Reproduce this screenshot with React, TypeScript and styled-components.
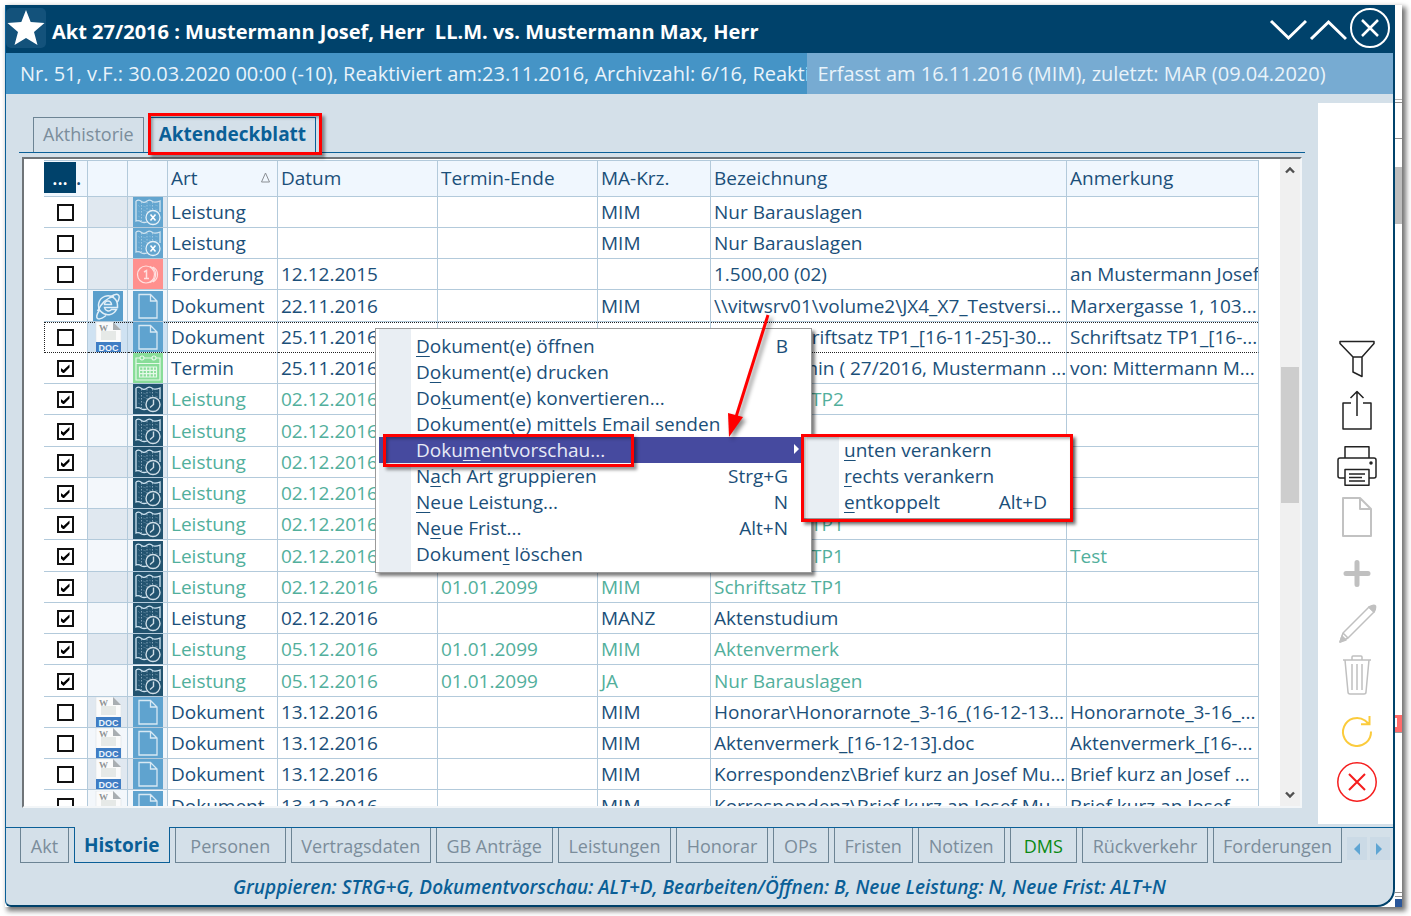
import React, { useState } from "react";
import styled, { createGlobalStyle, css } from "styled-components";

const color = {
  navy: "#00426b",
  blue: "#4594c6",
  blueLight: "#77abd2",
  panel: "#d4e0e9",
  line: "#b3cadb",
  accent: "#0a5f97",
  text: "#1b4f79",
  done: "#52af9c",
  muted: "#7b8d9b",
  mutedBorder: "#6c8494",
  red: "#ff0000",
};

const GlobalStyle = createGlobalStyle`
  *, *::before, *::after { box-sizing: border-box; }
  body {
    margin: 0;
    background: #fff;
    font-family: "Open Sans", "Noto Sans", sans-serif;
    font-size: 19px;
    line-height: 26px;
    color: ${color.text};
  }
  button { font: inherit; color: inherit; margin: 0; padding: 0; border: 0; background: none; cursor: pointer; }
  svg { display: block; }
`;

/* ---------- frame ---------- */

const Page = styled.div`
  height: 100vh;
  min-width: 1100px;
  padding: 5px 9px 9px 5px;
`;

const Capture = styled.div`
  position: relative;
  display: flex;
  height: 100%;
  background: #fff;
  box-shadow: 3px 3px 5px 1px rgba(0, 0, 0, 0.55);
`;

const Window = styled.section`
  flex: 1;
  min-width: 0;
  display: flex;
  flex-direction: column;
  background: ${color.panel};
  border: solid ${color.navy};
  border-width: 0 2px 2px 0;
  border-left: 1px solid ${color.accent};
  border-radius: 0 0 18px 6px;
  overflow: hidden;
`;

const Backdrop = styled.div`
  display: flex;
  flex-direction: column;
  width: 7px;
`;

const Band = styled.i<{ $h?: number; $fill?: string; $grow?: boolean }>`
  display: block;
  height: ${(p) => p.$h ?? 0}px;
  flex: ${(p) => (p.$grow ? "1" : "none")};
  background: ${(p) => p.$fill ?? "transparent"};
`;

/* ---------- title ---------- */

const TitleBar = styled.header`
  display: flex;
  align-items: center;
  height: 48px;
  background: ${color.navy};
  color: #fff;
`;

const StarBox = styled.button`
  width: 40px;
  height: 40px;
  margin-bottom: 2px;
  border-radius: 5px;
  background: #13527b;
`;

const Title = styled.h1`
  flex: 1;
  margin: 6px 0 0 6px;
  font-size: 20px;
  font-weight: 700;
  line-height: 26px;
  white-space: pre;
`;

const WindowButtons = styled.div`
  display: flex;
  align-items: center;
  gap: 2px;
  margin-right: 2px;
`;

const InfoBar = styled.div`
  display: flex;
  height: 41px;
  font-size: 20px;
  line-height: 42px;
  color: #e9f3fa;
  white-space: nowrap;
`;

const InfoLeft = styled.div`
  flex: 803 0 0;
  padding-left: 14px;
  background: ${color.blue};
  overflow: hidden;
`;

const InfoRight = styled.div`
  flex: 587 0 0;
  padding-left: 10px;
  background: ${color.blueLight};
  overflow: hidden;
`;

/* ---------- body ---------- */

const Body = styled.div`
  flex: 1;
  min-height: 0;
  display: flex;
  padding-bottom: 3px;
`;

const Content = styled.main`
  flex: 1;
  min-width: 0;
  display: flex;
  flex-direction: column;
  padding: 23px 13px 16px 13px;
`;

const TopTabs = styled.div`
  display: flex;
  gap: 5px;
  padding-left: 14px;
  border-bottom: 1px solid ${color.accent};
`;

const TopTab = styled.button<{ $active?: boolean }>`
  height: 35px;
  padding: 0 9px 2px;
  border: 1px solid ${(p) => (p.$active ? color.accent : color.mutedBorder)};
  border-bottom: 0;
  color: ${(p) => (p.$active ? color.accent : color.muted)};
  font-size: ${(p) => (p.$active ? 19 : 18)}px;
  font-weight: ${(p) => (p.$active ? 700 : 400)};
`;

const GridFrame = styled.div`
  flex: 1;
  min-height: 0;
  display: flex;
  margin: 4px 3px 0;
  border: 2px solid #f3f6f8;
  border-top-color: #6f7478;
  border-left-color: #6f7478;
  background: #fff;
`;

const GridScroll = styled.div`
  flex: 1;
  min-width: 0;
  overflow: hidden;
  padding: 1px 21px 0 20px;
`;

const Table = styled.table`
  width: 100%;
  table-layout: fixed;
  border-collapse: separate;
  border-spacing: 0;
  border-top: 1px solid ${color.line};
`;

const Th = styled.th`
  height: 36px;
  padding: 0 3px 2px;
  background: #f0f7fe;
  border: solid ${color.line};
  border-width: 0 1px 1px 0;
  font-weight: 400;
  text-align: left;
  white-space: nowrap;
`;

const HeadFlex = styled.div`
  display: flex;
  justify-content: space-between;
  align-items: center;
  padding-right: 4px;
`;

const PickCell = styled(Th)`
  padding: 0 0 2px;
`;

const PickFlex = styled.div`
  display: flex;
  align-items: center;
  font-weight: 600;
`;

const PickButton = styled.button`
  width: 32px;
  height: 31px;
  background: ${color.navy};
  color: #fff;
`;

const Td = styled.td<{ $done?: boolean }>`
  height: 31px;
  padding: 0 0 0 3px;
  border: solid ${color.line};
  border-width: 0 1px 1px 0;
  line-height: 26px;
  white-space: nowrap;
  overflow: hidden;
  color: ${(p) => (p.$done ? color.done : color.text)};
`;

const CheckCell = styled(Td)`
  padding: 0 1px 2px 0;
  text-align: center;
`;

const IconCell = styled(Td)`
  padding: 0 0 0 5px;
  background: #e0e8f0;
`;

const Row = styled.tr<{ $focus?: boolean }>`
  &:nth-child(even) ${IconCell} { background: #f3f7fb; }
  &:nth-child(4n) ${Td} { height: 32px; }
  ${(p) =>
    p.$focus &&
    css`
      ${IconCell} { background: #cfe2f2; }
      ${Td} {
        border-bottom: 1px dotted #222;
        background-image: repeating-linear-gradient(90deg, #222 0 1px, transparent 1px 2px);
        background-size: 100% 1px;
        background-repeat: no-repeat;
      }
      ${Td}:first-child { border-left: 1px dotted #222; }
    `}
`;

const Check = styled.input`
  appearance: none;
  display: inline-block;
  position: relative;
  width: 17px;
  height: 17px;
  margin: 0;
  border: 2px solid #111;
  background: #fff;
  vertical-align: middle;
  &:checked::after {
    content: "";
    position: absolute;
    inset: 2px;
    background: #000;
    clip-path: polygon(0 38%, 0 70%, 34% 100%, 100% 34%, 100% 0, 34% 62%);
  }
`;

const ScrollBar = styled.div`
  width: 20px;
  display: flex;
  flex-direction: column;
  align-items: center;
  background: #f0f0f0;
`;

const ScrollArrow = styled.button`
  display: flex;
  align-items: center;
  justify-content: center;
  width: 20px;
  height: 22px;
`;

const ScrollSpace = styled.div<{ $grow: number }>`
  flex: ${(p) => p.$grow} 0 0;
`;

const ScrollThumb = styled.div`
  flex: 136 0 0;
  width: 18px;
  background: #cdcdcd;
`;

/* ---------- side tools ---------- */

const SideBar = styled.aside`
  display: flex;
  flex-direction: column;
  justify-content: flex-end;
  align-items: center;
  gap: 16px;
  width: 75px;
  margin-top: 9px;
  padding: 0 0 22px 3px;
  background: #fff;
`;

const ToolGroup = styled.div`
  display: flex;
  flex-direction: column;
  gap: 11px;
`;

/* ---------- bottom ---------- */

const BottomTabs = styled.nav`
  display: flex;
  align-items: flex-start;
  gap: 5px;
  padding: 0 3px 0 14px;
  border-top: 1px solid ${color.accent};
`;

const BottomTab = styled.button<{ $active?: boolean; $green?: boolean; $grow: number }>`
  flex: ${(p) => p.$grow} 1 0;
  height: 35px;
  padding-top: 2px;
  border: 1px solid ${color.mutedBorder};
  border-top: 0;
  font-size: 18px;
  color: ${(p) => (p.$green ? "#0a8a12" : color.muted)};
  white-space: nowrap;
  ${(p) =>
    p.$active &&
    css`
      margin-top: -1px;
      padding: 0;
      height: 36px;
      border-color: ${color.accent};
      color: ${color.accent};
      background: ${color.panel};
      font-size: 19px;
      font-weight: 700;
    `}
`;

const PagerGroup = styled.div`
  display: flex;
  gap: 3px;
  margin-top: 9px;
`;

const PagerButton = styled.button`
  display: flex;
  align-items: center;
  justify-content: center;
  width: 20px;
  height: 23px;
  background: #cbdae6;
`;

const Hint = styled.footer`
  padding: 11px 0 5px;
  font-size: 19px;
  line-height: 26px;
  font-style: italic;
  font-weight: 600;
  color: ${color.accent};
  text-align: center;
`;

/* ---------- menus ---------- */

const Menu = styled.div`
  position: absolute;
  left: 370px;
  top: 323px;
  width: 437px;
  padding: 4px 3px 5px;
  border: 1px solid #9a9a9a;
  background: linear-gradient(90deg, #fff 3px, #e9eef3 3px 35px, #fff 35px);
  box-shadow: 3px 3px 3px rgba(0, 0, 0, 0.5);
`;

const SubMenu = styled(Menu)`
  left: 798px;
  top: 431px;
  width: 268px;
  padding: 0 3px 3px;
`;

const MenuItem = styled.button<{ $active?: boolean }>`
  display: flex;
  justify-content: space-between;
  width: 100%;
  height: 26px;
  padding: 0 20px 0 37px;
  line-height: 26px;
  white-space: nowrap;
  background: ${(p) => (p.$active ? "#464a9f" : "transparent")};
  color: ${(p) => (p.$active ? "#e8eaf6" : color.text)};
  u { text-underline-offset: 3px; text-decoration-thickness: 1px; }
`;

const MenuCaret = styled.svg`
  margin: 7px -12px 0 0;
`;

const Marker = styled.div<{ $x: number; $y: number; $w: number; $h: number }>`
  position: absolute;
  left: ${(p) => p.$x}px;
  top: ${(p) => p.$y}px;
  width: ${(p) => p.$w}px;
  height: ${(p) => p.$h}px;
  border: 3px solid ${color.red};
  box-shadow: 3px 3px 3px rgba(0, 0, 0, 0.4), inset 2px 2px 3px rgba(0, 0, 0, 0.3);
  pointer-events: none;
`;

const ArrowLayer = styled.svg`
  position: absolute;
  left: 715px;
  top: 305px;
  filter: drop-shadow(3px 3px 2px rgba(0, 0, 0, 0.45));
  pointer-events: none;
`;

/* ---------- icons ---------- */

const MapSheet = () => (
  <>
    <path d="M3 4 Q6 2 8.5 4.5 Q11 6.5 14 4 Q17 2 19.5 4.5 Q22 6 27 4 V15 M3 4 V24 Q6 23 8.5 25 Q11 26 14 25" fill="none" stroke="#cfe3f0" strokeWidth="1.3" />
    <path d="M8.5 5 V24 M14 5 V21 M19.500 5 V15" fill="none" stroke="#cfe3f0" strokeWidth=".8" strokeDasharray="1.500 1.500" opacity=".7" />
    <path d="M5 8 l2 2 M10 9 l3 1 M10 13 l3 1 M16 8 l2 1 M16 12 l2 1 M22 8 l3 1 M22 12 l3 1 M5 14 l2 1 M5 19 l2 1 M10 18 l2 1" stroke="#cfe3f0" strokeWidth=".6" opacity=".35" />
  </>
);

const CancelIcon = () => (
  <svg width="30" height="30" viewBox="0 0 30 30">
    <rect width="30" height="30" fill="#63a5cf" />
    <MapSheet />
    <circle cx="20" cy="20.500" r="7" fill="#63a5cf" stroke="#e6f1f8" strokeWidth="1.300" />
    <path d="M17.500 17.500 l5 6 M22.500 17.500 l-5 6" stroke="#fff" strokeWidth="1.600" />
  </svg>
);

const ClockIcon = () => (
  <svg width="30" height="30" viewBox="0 0 30 30">
    <rect width="30" height="30" fill="#22536f" />
    <MapSheet />
    <circle cx="20" cy="20.500" r="7" fill="#22536f" stroke="#cfdde6" strokeWidth="1.400" />
    <path d="M20.500 15.500 V20.500 L17 23.500" fill="none" stroke="#cfdde6" strokeWidth="1.400" />
  </svg>
);

const MoneyIcon = () => (
  <svg width="30" height="30" viewBox="0 0 30 30">
    <rect width="30" height="30" fill="#ff908e" />
    <g fill="none" stroke="#ffe0df" strokeWidth="1.200">
      <circle cx="13" cy="15.500" r="8.500" />
      <path d="M17 7.500 A8.500 8.500 0 0 1 17 23.500 M20 8 A8.500 8.500 0 0 1 20 23" />
      <path d="M11 13 L13.500 11.500 V19.500 M11 19.500 H16" strokeWidth="1.500" />
    </g>
  </svg>
);

const FileIcon = () => (
  <svg width="30" height="30" viewBox="0 0 30 30">
    <rect width="30" height="30" fill="#5fa3cf" />
    <path d="M6 3.500 H17.500 L24 10 V27 H6 Z M17.500 3.500 V10 H24" fill="none" stroke="#d8e9f4" strokeWidth="1.300" />
  </svg>
);

const CalendarIcon = () => (
  <svg width="30" height="30" viewBox="0 0 30 30">
    <rect width="30" height="30" fill="#88dd98" />
    <g fill="none" stroke="#e6f9e9" strokeWidth="1.200">
      <path d="M7 5 H3 V27 H27 V5 H23 M11 5 H19 M3 10.500 H27" />
      <circle cx="9" cy="5" r="2" />
      <circle cx="21" cy="5" r="2" />
      <path d="M6.500 14 H23.500 V24 H6.500 Z M6.500 17.300 H23.500 M6.500 20.700 H23.500 M10 14 V24 M13.500 14 V24 M17 14 V24 M20.500 14 V24" />
    </g>
  </svg>
);

const BrowserIcon = () => (
  <svg width="30" height="30" viewBox="0 0 30 30">
    <rect width="30" height="30" fill="#5a9fcc" />
    <g fill="none" stroke="#e2eff8" strokeWidth="1.500">
      <path d="M23.500 18.500 A9.500 9.500 0 1 1 24.500 14.500 V16.500 H11.500 A4 4 0 0 0 18.500 18.500 Z" />
      <path d="M11.500 13.500 A3.500 3.500 0 0 1 18.500 13.500 Z" />
      <path d="M6.500 19 C0 29 6 30 13 24.500 M17 6 C25 1 28.500 3.500 24.500 11 M4.500 20 C8 13 14 7 21 5" />
    </g>
  </svg>
);

const DocIcon = () => (
  <svg width="30" height="30" viewBox="0 0 30 30">
    <path d="M3 0 H20 L28 8 V30 H3 Z" fill="#fbfbfb" stroke="#dde2e6" strokeWidth=".6" />
    <path d="M20 0 L28 8 H20 Z" fill="#a9aeb2" />
    <rect x="8" y="9" width="15" height="9" fill="#e6e9e7" />
    <text x="6" y="9" fontFamily="Liberation Serif" fontWeight="700" fontSize="9" fill="#8f9396">W</text>
    <rect x="3" y="20" width="25" height="10" fill="#3f7dc4" />
    <text x="15.500" y="28.500" textAnchor="middle" fontFamily="Liberation Sans" fontWeight="700" fontSize="9" fill="#eef5fc">DOC</text>
  </svg>
);

type ToolProps = { label: string; stroke: string; width?: number; children: React.ReactNode };

const Tool = ({ label, stroke, width = 1.5, children }: ToolProps) => (
  <button type="button" aria-label={label}>
    <svg width="42" height="40" viewBox="0 0 42 40" fill="none" stroke={stroke} strokeWidth={width} strokeLinejoin="round">
      {children}
    </svg>
  </button>
);

/* ---------- data ---------- */

type Kind = "cancel" | "clock" | "money" | "file" | "calendar";

type Entry = {
  checked?: boolean;
  attachment?: "web" | "doc";
  kind: Kind;
  art: string;
  datum?: string;
  ende?: string;
  kuerzel?: string;
  text: string;
  note?: string;
  done?: boolean;
  focus?: boolean;
};

const leistung = (datum: string, text: string, kuerzel = "MIM", note = "", ende = "01.01.2099"): Entry => ({
  checked: true, kind: "clock", art: "Leistung", datum, ende, kuerzel, text, note, done: true,
});

const dokument = (text: string, note: string): Entry => ({
  attachment: "doc", kind: "file", art: "Dokument", datum: "13.12.2016", kuerzel: "MIM", text, note,
});

const entries: Entry[] = [
  { kind: "cancel", art: "Leistung", kuerzel: "MIM", text: "Nur Barauslagen" },
  { kind: "cancel", art: "Leistung", kuerzel: "MIM", text: "Nur Barauslagen" },
  { kind: "money", art: "Forderung", datum: "12.12.2015", text: "1.500,00 (02)", note: "an Mustermann Josef" },
  { attachment: "web", kind: "file", art: "Dokument", datum: "22.11.2016", kuerzel: "MIM", text: "\\\\vitwsrv01\\volume2\\JX4_X7_Testversi...", note: "Marxergasse 1, 103..." },
  { attachment: "doc", kind: "file", art: "Dokument", datum: "25.11.2016", kuerzel: "MIM", text: "Klagen\\Schriftsatz TP1_[16-11-25]-30...", note: "Schriftsatz TP1_[16-...", focus: true },
  { checked: true, kind: "calendar", art: "Termin", datum: "25.11.2016", kuerzel: "MIM", text: "Erster Termin ( 27/2016, Mustermann ...", note: "von: Mittermann M..." },
  leistung("02.12.2016", "Schriftsatz TP2"),
  leistung("02.12.2016", "Brief"),
  leistung("02.12.2016", "Brief"),
  leistung("02.12.2016", "Brief"),
  leistung("02.12.2016", "Schriftsatz TP1"),
  leistung("02.12.2016", "Schriftsatz TP1", "MIM", "Test"),
  leistung("02.12.2016", "Schriftsatz TP1"),
  { checked: true, kind: "clock", art: "Leistung", datum: "02.12.2016", kuerzel: "MANZ", text: "Aktenstudium" },
  leistung("05.12.2016", "Aktenvermerk"),
  leistung("05.12.2016", "Nur Barauslagen", "JA"),
  dokument("Honorar\\Honorarnote_3-16_(16-12-13...", "Honorarnote_3-16_..."),
  dokument("Aktenvermerk_[16-12-13].doc", "Aktenvermerk_[16-..."),
  dokument("Korrespondenz\\Brief kurz an Josef Mu...", "Brief kurz an Josef ..."),
  dokument("Korrespondenz\\Brief kurz an Josef Mu...", "Brief kurz an Josef ..."),
];

const kindIcon: Record<Kind, React.ReactNode> = {
  cancel: <CancelIcon />,
  clock: <ClockIcon />,
  money: <MoneyIcon />,
  file: <FileIcon />,
  calendar: <CalendarIcon />,
};

const bottomTabs: { label: string; grow: number }[] = [
  { label: "Akt", grow: 48 },
  { label: "Historie", grow: 96 },
  { label: "Personen", grow: 112 },
  { label: "Vertragsdaten", grow: 141 },
  { label: "GB Anträge", grow: 118 },
  { label: "Leistungen", grow: 114 },
  { label: "Honorar", grow: 92 },
  { label: "OPs", grow: 55 },
  { label: "Fristen", grow: 79 },
  { label: "Notizen", grow: 87 },
  { label: "DMS", grow: 67 },
  { label: "Rückverkehr", grow: 127 },
  { label: "Forderungen", grow: 130 },
];

/* [before, access key, after, shortcut] */
const menuItems: [string, string, string, string][] = [
  ["", "D", "okument(e) öffnen", "B"],
  ["D", "o", "kument(e) drucken", ""],
  ["Do", "k", "ument(e) konvertieren...", ""],
  ["Dok", "u", "ment(e) mittels Email senden", ""],
  ["Doku", "m", "entvorschau...", ">"],
  ["N", "a", "ch Art gruppieren", "Strg+G"],
  ["", "N", "eue Leistung...", "N"],
  ["N", "e", "ue Frist...", "Alt+N"],
  ["Dokumen", "t", " löschen", ""],
];

const subItems: [string, string, string, string][] = [
  ["", "u", "nten verankern", ""],
  ["", "r", "echts verankern", ""],
  ["", "e", "ntkoppelt", "Alt+D"],
];

const MenuRows = ({ items }: { items: [string, string, string, string][] }) => (
  <>
    {items.map(([pre, key, post, hot]) => (
      <MenuItem key={pre + key + post} type="button" role="menuitem" $active={hot === ">"}>
        <span>{pre}<u>{key}</u>{post}</span>
        {hot === ">" ? (
          <MenuCaret width="6" height="10" viewBox="0 0 6 10"><path d="M0 0 L5 5 L0 10 Z" fill="#fff" /></MenuCaret>
        ) : (
          <span>{hot}</span>
        )}
      </MenuItem>
    ))}
  </>
);

export default function App() {
  const [checks, setChecks] = useState(entries.map((e) => !!e.checked));
  const toggle = (i: number) => setChecks(checks.map((c, n) => (n === i ? !c : c)));

  return (
    <Page>
      <GlobalStyle />
      <Capture>
        <Window>
          <TitleBar>
            <StarBox type="button" aria-label="Favorit">
              <svg width="40" height="40" viewBox="0 0 40 40">
                <path d="M20 2 L24.700 14 L38.500 15 L28 24 L31.500 37 L20 30 L8.500 37 L12 24 L1.500 15 L15.300 14 Z" fill="#fff" />
              </svg>
            </StarBox>
            <Title>{"Akt 27/2016 : Mustermann Josef, Herr  LL.M. vs. Mustermann Max, Herr"}</Title>
            <WindowButtons>
              <button type="button" aria-label="Nach unten">
                <svg width="38" height="40" viewBox="0 0 38 40"><path d="M2 12 L19.500 29 L37 12" fill="none" stroke="#fff" strokeWidth="3" /></svg>
              </button>
              <button type="button" aria-label="Nach oben">
                <svg width="38" height="40" viewBox="0 0 38 40"><path d="M2 30 L19.500 13 L37 30" fill="none" stroke="#fff" strokeWidth="3" /></svg>
              </button>
              <button type="button" aria-label="Schließen">
                <svg width="42" height="42" viewBox="0 0 42 42" fill="none" stroke="#fff">
                  <circle cx="21" cy="20" r="19" strokeWidth="2" />
                  <path d="M13 12 L29 28 M29 12 L13 28" strokeWidth="2.500" />
                </svg>
              </button>
            </WindowButtons>
          </TitleBar>
          <InfoBar>
            <InfoLeft>Nr. 51, v.F.: 30.03.2020 00:00 (-10), Reaktiviert am:23.11.2016, Archivzahl: 6/16, Reaktivierung</InfoLeft>
            <InfoRight>Erfasst am 16.11.2016 (MIM), zuletzt: MAR (09.04.2020)</InfoRight>
          </InfoBar>

          <Body>
            <Content>
              <TopTabs>
                <TopTab type="button">Akthistorie</TopTab>
                <TopTab type="button" $active>Aktendeckblatt</TopTab>
              </TopTabs>
              <GridFrame>
                <GridScroll>
                  <Table>
                    <colgroup>
                      <col width="44" /><col width="40" /><col width="40" /><col width="110" />
                      <col width="160" /><col width="160" /><col width="113" /><col /><col width="192" />
                    </colgroup>
                    <thead>
                      <tr>
                        <PickCell><PickFlex><PickButton type="button">...</PickButton>.</PickFlex></PickCell>
                        <Th aria-label="Anhang" />
                        <Th aria-label="Typ" />
                        <Th>
                          <HeadFlex>
                            Art
                            <svg width="9" height="11" viewBox="0 0 9 11"><path d="M4.500 1 L8.500 10 H.5 Z" fill="none" stroke="#8a8f94" /></svg>
                          </HeadFlex>
                        </Th>
                        <Th>Datum</Th>
                        <Th>Termin-Ende</Th>
                        <Th>MA-Krz.</Th>
                        <Th>Bezeichnung</Th>
                        <Th>Anmerkung</Th>
                      </tr>
                    </thead>
                    <tbody>
                      {entries.map((e, i) => (
                        <Row key={i} $focus={e.focus}>
                          <CheckCell>
                            <Check type="checkbox" aria-label={`Zeile ${i + 1}`} checked={checks[i]} onChange={() => toggle(i)} />
                          </CheckCell>
                          <IconCell>{e.attachment === "web" ? <BrowserIcon /> : e.attachment === "doc" ? <DocIcon /> : null}</IconCell>
                          <IconCell>{kindIcon[e.kind]}</IconCell>
                          <Td $done={e.done}>{e.art}</Td>
                          <Td $done={e.done}>{e.datum}</Td>
                          <Td $done={e.done}>{e.ende}</Td>
                          <Td $done={e.done}>{e.kuerzel}</Td>
                          <Td $done={e.done}>{e.text}</Td>
                          <Td $done={e.done}>{e.note}</Td>
                        </Row>
                      ))}
                    </tbody>
                  </Table>
                </GridScroll>
                <ScrollBar>
                  <ScrollArrow type="button" aria-label="Hoch">
                    <svg width="10" height="8" viewBox="0 0 10 8"><path d="M1 6.500 L5 2.500 L9 6.500" fill="none" stroke="#505050" strokeWidth="2.400" /></svg>
                  </ScrollArrow>
                  <ScrollSpace $grow={186} />
                  <ScrollThumb />
                  <ScrollSpace $grow={281} />
                  <ScrollArrow type="button" aria-label="Runter">
                    <svg width="10" height="8" viewBox="0 0 10 8"><path d="M1 1.500 L5 5.500 L9 1.500" fill="none" stroke="#505050" strokeWidth="2.400" /></svg>
                  </ScrollArrow>
                </ScrollBar>
              </GridFrame>
            </Content>

            <SideBar>
              <ToolGroup>
                <Tool label="Filter" stroke="#222">
                  <path d="M4 2.500 H38 V4.500 L26 18 V37.500 L17 33 V18 L4 4.500 Z M17 18 H26" />
                </Tool>
                <Tool label="Exportieren" stroke="#222">
                  <path d="M15 13 H7 V39 H35 V13 H27 M21 26 V1.500 M14.500 8 L21 1.500 L27.500 8" />
                </Tool>
              </ToolGroup>
              <ToolGroup>
                <Tool label="Drucken" stroke="#222">
                  <path d="M9 12 V.8 H33 V12 M9 32 H4 Q2 32 2 30 V14 Q2 12 4 12 H38 Q40 12 40 14 V30 Q40 32 38 32 H33 M9 23.500 H33 V39.200 H9 Z M13 28 H29 M13 31.500 H26 M13 35 H29" />
                  <circle cx="35" cy="17" r="1" fill="#222" />
                </Tool>
                <Tool label="Neues Dokument" stroke="#c2c2c2" width={2}>
                  <path d="M7 1 H24 L35 12 V39 H7 Z M24 1 V12 H35" />
                </Tool>
              </ToolGroup>
              <ToolGroup>
                <Tool label="Hinzufügen" stroke="#c0c0c0" width={5}>
                  <path d="M21 9.500 V31.500 M10 20.500 H32" strokeLinecap="round" />
                </Tool>
                <Tool label="Bearbeiten" stroke="#c0c0c0">
                  <path d="M4 38 L7 29 L33 3 L38 8 L12 34 Z M7 29 L12 34" />
                  <path d="M33 3 Q38 0 39.500 2 Q40 5 38 8 Z M4 38 L6 32 L10 36 Z" fill="#c0c0c0" />
                </Tool>
                <Tool label="Löschen" stroke="#c0c0c0">
                  <path d="M7 5 H35 M16 5 V2 Q16 1 17 1 H25 Q26 1 26 2 V5 M9 5 L12 37 Q12 39 14 39 H28 Q30 39 30 37 L33 5 M16 9 V35 M21 9 V35 M26 9 V35" />
                </Tool>
              </ToolGroup>
              <ToolGroup>
                <Tool label="Aktualisieren" stroke="#fbcb3c" width={2}>
                  <path d="M35 20.500 A14 14 0 1 1 29 9.500 L33 13 M33.500 5 V13.300 H25" strokeLinejoin="miter" />
                </Tool>
                <Tool label="Abbrechen" stroke="#f51d1d">
                  <circle cx="21" cy="20" r="19.200" />
                  <path d="M13 12 L29 28 M29 12 L13 28" strokeWidth="2" />
                </Tool>
              </ToolGroup>
            </SideBar>
          </Body>

          <BottomTabs>
            {bottomTabs.map((t) => (
              <BottomTab key={t.label} type="button" $grow={t.grow} $active={t.label === "Historie"} $green={t.label === "DMS"}>
                {t.label}
              </BottomTab>
            ))}
            <PagerGroup>
              <PagerButton type="button" aria-label="Zurück">
                <svg width="7" height="12" viewBox="0 0 7 12"><path d="M7 0 L1 6 L7 12 Z" fill="#5fa5d3" /></svg>
              </PagerButton>
              <PagerButton type="button" aria-label="Weiter">
                <svg width="7" height="12" viewBox="0 0 7 12"><path d="M0 0 L6 6 L0 12 Z" fill="#5fa5d3" /></svg>
              </PagerButton>
            </PagerGroup>
          </BottomTabs>
          <Hint>Gruppieren: STRG+G, Dokumentvorschau: ALT+D, Bearbeiten/Öffnen: B, Neue Leistung: N, Neue Frist: ALT+N</Hint>
        </Window>

        <Backdrop aria-hidden="true">
          <Band $h={94} /><Band $h={1} $fill="#b5b5b5" /><Band $h={2} /><Band $h={1} $fill="#909090" />
          <Band $h={35} /><Band $h={1} $fill="#909090" /><Band $h={28} /><Band $h={57} $fill="#bdbdbd" />
          <Band $grow />
          <Band $h={3} $fill="#ff6b6b" /><Band $h={9} $fill="linear-gradient(90deg, #fff 2px, #ff6b6b 2px)" /><Band $h={5} $fill="#ff6b6b" /><Band $h={1} $fill="#a0a0a0" />
          <Band $h={159} /><Band $h={1} $fill="#909090" /><Band $h={3} /><Band $h={1} $fill="#909090" /><Band $h={2} /><Band $h={8} $fill="#2b579a" />
        </Backdrop>

        <Menu role="menu"><MenuRows items={menuItems} /></Menu>
        <SubMenu role="menu"><MenuRows items={subItems} /></SubMenu>
        <Marker $x={143} $y={108} $w={174} $h={42} />
        <Marker $x={378} $y={429} $w={251} $h={33} />
        <Marker $x={796} $y={429} $w={272} $h={88} />
        <ArrowLayer width="60" height="140" viewBox="0 0 60 140">
          <path d="M48 5 L16 107" stroke={color.red} strokeWidth="3" />
          <path d="M8 103 L23 107 L9 127 Z" fill={color.red} />
        </ArrowLayer>
      </Capture>
    </Page>
  );
}
